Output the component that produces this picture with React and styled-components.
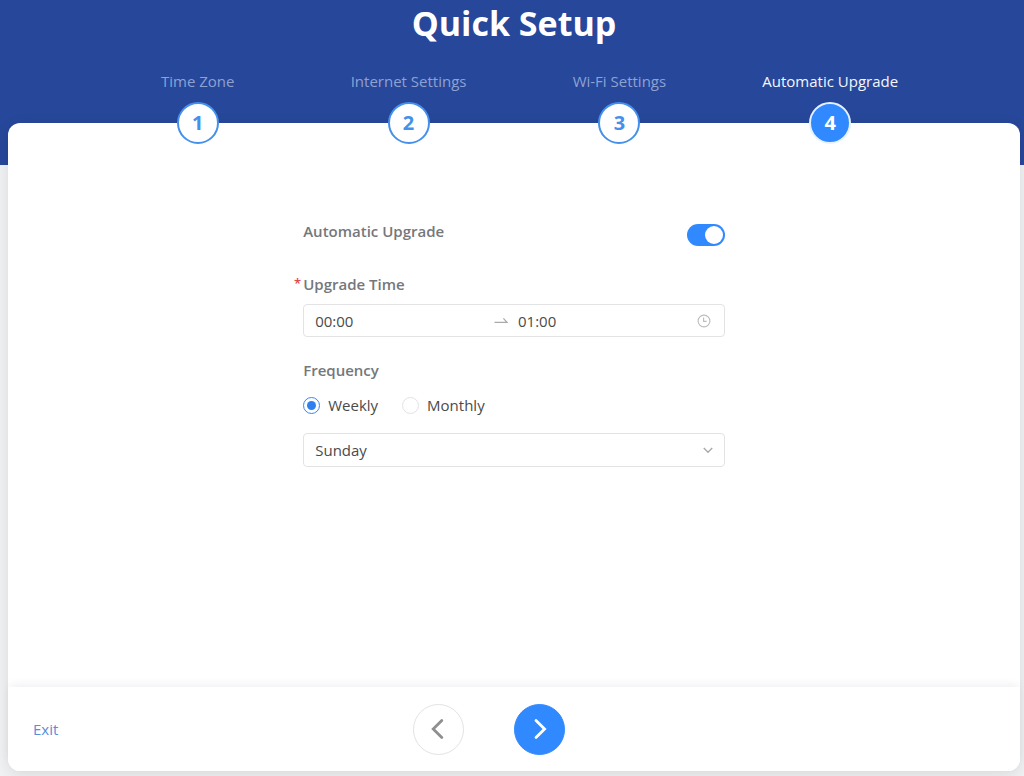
import React, { useState } from 'react'
import styled, { createGlobalStyle } from 'styled-components'

const steps = ["Time Zone", "Internet Settings", "Wi-Fi Settings", "Automatic Upgrade"]
const days = ["Sunday", "Monday", "Tuesday", "Wednesday", "Thursday", "Friday", "Saturday"]

const ArrowIcon = () => (
  <svg width="14" height="14" viewBox="0 0 14 14" fill="none" stroke="#aaaaaa" strokeWidth="1.2" aria-hidden="true">
    <path d="M0.5 8.4H13L9.4 4.4" />
  </svg>
)

const ClockIcon = () => (
  <svg width="14" height="14" viewBox="0 0 14 14" fill="none" stroke="#bcbcbc" strokeWidth="1.1" aria-hidden="true">
    <circle cx="7" cy="7" r="5.9" />
    <path d="M6.6 3.6V7.4H9.6" />
  </svg>
)

const DownIcon = () => (
  <svg width="10" height="10" viewBox="0 0 10 10" fill="none" stroke="#a9a9a9" strokeWidth="1.4" aria-hidden="true">
    <path d="M0.8 3L5 7.2L9.2 3" />
  </svg>
)

const ChevronIcon = ({ d }) => (
  <svg width="24" height="24" viewBox="0 0 24 24" fill="none" stroke="currentColor" strokeWidth="2.8" strokeLinecap="round" aria-hidden="true">
    <path d={d} />
  </svg>
)

const App = () => {
  const [current, setCurrent] = useState(3)
  const [enabled, setEnabled] = useState(true)
  const [start, setStart] = useState("00:00")
  const [end, setEnd] = useState("01:00")
  const [frequency, setFrequency] = useState("Weekly")
  const [day, setDay] = useState("Sunday")

  return (
    <Page>
      <GlobalStyle />
      <Title>Quick Setup</Title>
      <Steps>
        {steps.map((name, i) => (
          <Step key={name} $active={i === current}>
            {name}
            <StepNumber $active={i === current}>{i + 1}</StepNumber>
          </Step>
        ))}
      </Steps>
      <Card>
        <Form>
          <SwitchRow>
            <Label htmlFor="auto">Automatic Upgrade</Label>
            <Switch id="auto" type="checkbox" checked={enabled} onChange={e => setEnabled(e.target.checked)} />
          </SwitchRow>
          <Field>
            <Label htmlFor="start" $required>Upgrade Time</Label>
            <TimeRange>
              <TimeInput id="start" value={start} onChange={e => setStart(e.target.value)} />
              <ArrowIcon />
              <TimeInput aria-label="End time" value={end} onChange={e => setEnd(e.target.value)} />
              <ClockIcon />
            </TimeRange>
          </Field>
          <Frequency>
            <Label as="legend">Frequency</Label>
            <RadioRow>
              {["Weekly", "Monthly"].map(name => (
                <RadioLabel key={name}>
                  <Radio type="radio" name="frequency" checked={frequency === name} onChange={() => setFrequency(name)} />
                  {name}
                </RadioLabel>
              ))}
            </RadioRow>
            <SelectBox>
              <Select aria-label="Day" value={day} onChange={e => setDay(e.target.value)}>
                {days.map(d => <option key={d}>{d}</option>)}
              </Select>
              <DownIcon />
            </SelectBox>
          </Frequency>
        </Form>
        <Footer>
          <ExitLink href="#exit">Exit</ExitLink>
          <RoundButton aria-label="Previous" onClick={() => setCurrent(Math.max(0, current - 1))}>
            <ChevronIcon d="M15.8 3.4L7.2 12L15.8 20.6" />
          </RoundButton>
          <RoundButton $primary aria-label="Next" onClick={() => setCurrent(Math.min(3, current + 1))}>
            <ChevronIcon d="M9 3.4L17.6 12L9 20.6" />
          </RoundButton>
        </Footer>
      </Card>
    </Page>
  )
}

export default App

const GlobalStyle = createGlobalStyle`
  *, *::before, *::after {
    box-sizing: border-box;
  }
  body {
    margin: 0;
    font-family: "Open Sans", "Noto Sans", sans-serif;
    font-size: 15px;
    line-height: 22px;
    color: #4a4a4a;
  }
  button, input, select {
    font: inherit;
    color: inherit;
    margin: 0;
  }
`
const Page = styled.main`
  min-height: 100vh;
  display: flex;
  flex-direction: column;
  padding: 0 4px 5px 8px;
  background: linear-gradient(#27479a, #27479a) 0 0 / 100% 165px no-repeat #f1f2f4;
`
const Title = styled.h1`
  margin: 0;
  font-size: 34px;
  line-height: 46px;
  font-weight: 700;
  text-align: center;
  color: #ffffff;
`
const Steps = styled.ol`
  list-style: none;
  margin: 24px auto -21px;
  padding: 0;
  width: 83.33%;
  display: grid;
  grid-template-columns: repeat(4, 1fr);
  position: relative;
  z-index: 1;
`
const Step = styled.li`
  display: flex;
  flex-direction: column;
  align-items: center;
  gap: 10px;
  color: ${p => p.$active ? "#f4f7ff" : "#8ea2d2"};
`
const StepNumber = styled.span`
  width: 42px;
  height: 42px;
  border-radius: 50%;
  border: 2px solid ${p => p.$active ? "#e6f1ff" : "#4590ea"};
  background: ${p => p.$active ? "#3089fe" : "#ffffff"};
  color: ${p => p.$active ? "#ffffff" : "#4590ea"};
  display: flex;
  align-items: center;
  justify-content: center;
  font-size: 20px;
  font-weight: 700;
`
const Card = styled.section`
  flex: 1;
  display: flex;
  flex-direction: column;
  background: #ffffff;
  border-radius: 12px;
  box-shadow: 0 4px 16px rgba(0, 0, 0, 0.1);
`
const Form = styled.form`
  flex: 1;
  width: 41.66%;
  margin: 0 auto;
  padding: 97px 0 24px;
`
const Label = styled.label`
  display: block;
  padding: 0;
  font-weight: 600;
  color: #75777b;
  position: relative;
  ${p => p.$required && `
    &::before {
      content: "*";
      position: absolute;
      right: 100%;
      margin-right: 2px;
      font-size: 13px;
      line-height: 20px;
      color: #e0484c;
    }
  `}
`
const SwitchRow = styled.div`
  display: flex;
  justify-content: space-between;
  height: 26px;
`
const Switch = styled.input`
  appearance: none;
  align-self: flex-end;
  width: 38px;
  height: 22px;
  padding: 2px;
  border-radius: 11px;
  display: flex;
  justify-content: ${p => p.checked ? "flex-end" : "flex-start"};
  background: ${p => p.checked ? "#3089fe" : "#bfbfbf"};
  cursor: pointer;
  &::before {
    content: "";
    width: 18px;
    height: 18px;
    border-radius: 50%;
    background: #ffffff;
  }
`
const Field = styled.div`
  display: flex;
  flex-direction: column;
  align-items: flex-start;
  gap: 9px;
  margin-top: 27px;
`
const TimeRange = styled.div`
  width: 100%;
  height: 33px;
  display: flex;
  align-items: center;
  gap: 10px;
  padding: 0 13px 0 11px;
  border: 1px solid #e3e3e5;
  border-radius: 4px;
`
const TimeInput = styled.input`
  flex: 1;
  min-width: 0;
  height: 22px;
  padding: 0;
  border: 0;
  outline: 0;
  background: none;
`
const Frequency = styled.fieldset`
  margin: 22px 0 0;
  padding: 0;
  border: 0;
  min-width: 0;
`
const RadioRow = styled.div`
  display: flex;
  gap: 24px;
  margin: 13px 0 17px;
`
const RadioLabel = styled.label`
  display: flex;
  align-items: center;
  gap: 8px;
`
const Radio = styled.input`
  appearance: none;
  width: 17px;
  height: 17px;
  border: 1px solid ${p => p.checked ? "#3089fe" : "#e3e3e5"};
  border-radius: 50%;
  display: grid;
  place-items: center;
  background: #ffffff;
  &:checked::before {
    content: "";
    width: 9px;
    height: 9px;
    border-radius: 50%;
    background: #2f7ff0;
  }
`
const SelectBox = styled.div`
  position: relative;
  svg {
    position: absolute;
    right: 12px;
    top: 12px;
    pointer-events: none;
  }
`
const Select = styled.select`
  appearance: none;
  display: block;
  width: 100%;
  height: 34px;
  padding: 0 32px 1px 11px;
  border: 1px solid #e3e3e5;
  border-radius: 4px;
  background: #ffffff;
`
const Footer = styled.footer`
  display: grid;
  grid-template-columns: 40% 10% auto;
  align-items: center;
  height: 84px;
  border-radius: 0 0 12px 12px;
  background: #ffffff;
  box-shadow: 0 -4px 10px -3px rgba(60, 40, 80, 0.1);
`
const ExitLink = styled.a`
  justify-self: start;
  margin-left: 25px;
  color: #5a8ddc;
  text-decoration: none;
`
const RoundButton = styled.button`
  width: 51px;
  height: 51px;
  padding: 0;
  border: 1px solid ${p => p.$primary ? "#3089fe" : "#e3e3e5"};
  border-radius: 50%;
  background: ${p => p.$primary ? "#3089fe" : "#ffffff"};
  color: ${p => p.$primary ? "#ffffff" : "#8f8f8f"};
  display: flex;
  align-items: center;
  justify-content: center;
  cursor: pointer;
`
